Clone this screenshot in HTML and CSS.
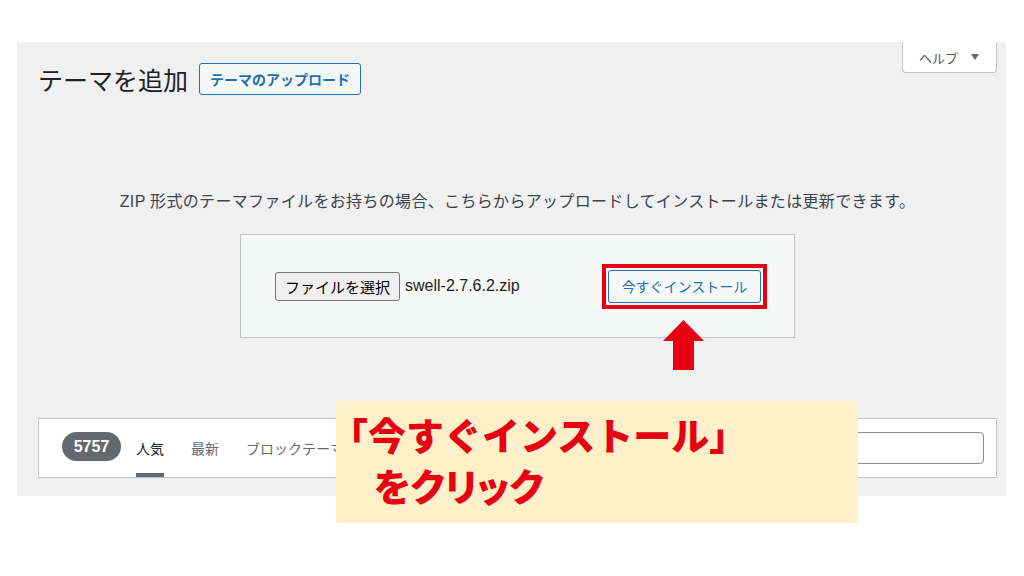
FILE: index.html
```html
<!DOCTYPE html>
<html lang="ja">
<head>
  <meta charset="UTF-8" />
  <meta name="viewport" content="width=device-width, initial-scale=1.0"/>
  <title>テーマを追加</title>
  <link rel="stylesheet" href="styles.css">
</head>
<body>
  <div class="wrap">
    <div class="top-row">
      <div class="heading">
        <h1>テーマを追加</h1>
        <button class="upload-toggle">テーマのアップロード</button>
      </div>
      <button class="help-tab">ヘルプ<span class="caret"></span></button>
    </div>

    <p class="upload-note">ZIP 形式のテーマファイルをお持ちの場合、こちらからアップロードしてインストールまたは更新できます。</p>

    <form class="upload-box" onsubmit="return false">
      <label class="file-pick">
        <span class="file-btn">ファイルを選択</span>
        <span class="file-name">swell-2.7.6.2.zip</span>
      </label>
      <div class="mark">
        <button class="install">今すぐインストール</button>
        <svg class="arrow" width="41" height="50" viewBox="0 0 41 50" aria-hidden="true">
          <polygon points="20.5,0 41,21 31,21 31,50 10,50 10,21 0,21" fill="#e60012"/>
        </svg>
      </div>
    </form>

    <div class="filter-bar">
      <span class="count">5757</span>
      <ul class="tabs">
        <li class="current">人気</li>
        <li>最新</li>
        <li>ブロックテーマ</li>
      </ul>
      <input class="search" type="search" aria-label="テーマを検索">
    </div>
  </div>

  <div class="callout">
    <span class="line-1">「今すぐインストール」</span>
    <span class="line-2">をクリック</span>
  </div>
</body>
</html>
```

FILE: styles.css
```css
body {
  margin: 0;
  background: #fff;
  font-family: "Liberation Sans", "Noto Sans CJK JP", sans-serif;
  color: #3c434a;
  position: relative;
  height: 576px;
  overflow: hidden;
}
.wrap {
  margin: 42px 18px 0 17px;
  height: 454px;
  box-sizing: border-box;
  background: #f0f0f1;
  padding: 0 9px 0 21px;
}
.top-row {
  display: flex;
  justify-content: space-between;
  align-items: flex-start;
}
.heading {
  display: flex;
  align-items: center;
  gap: 11px;
  margin-top: 21px;
  height: 32px;
}
h1 {
  margin: 0;
  font-family: "Noto Sans CJK JP", sans-serif;
  font-size: 25px;
  font-weight: 400;
  line-height: 32px;
  color: #1d2327;
}
.upload-toggle {
  height: 32px;
  padding: 0 10px;
  border: 1px solid #2271b1;
  border-radius: 3px;
  background: #f6f7f7;
  color: #2271b1;
  font: 700 14px/30px "Noto Sans CJK JP", sans-serif;
}
.help-tab {
  display: flex;
  align-items: center;
  height: 31px;
  padding: 0 17px 0 16px;
  border: 1px solid #c3c4c7;
  border-top: none;
  border-radius: 0 0 4px 4px;
  background: #fff;
  color: #50575e;
  font: 13px/1 "Noto Sans CJK JP", sans-serif;
}
.caret {
  margin-left: 13px;
  border-left: 4px solid transparent;
  border-right: 4px solid transparent;
  border-top: 6px solid #646970;
}
.upload-note {
  margin: 95px 0 0;
  font-size: 16px;
  line-height: 24px;
  letter-spacing: 0.33px;
  text-align: center;
}
.upload-box {
  margin: 20px 0 0 202px;
  width: 555px;
  height: 104px;
  box-sizing: border-box;
  border: 1px solid #c3c4c7;
  background: #f6f7f7;
  display: flex;
  align-items: center;
  padding: 0 27px 0 34px;
}
.file-pick {
  display: flex;
  align-items: center;
  gap: 5px;
}
.file-btn {
  height: 29px;
  box-sizing: border-box;
  padding: 0 9px;
  border: 1px solid #767676;
  border-radius: 3px;
  background: #efefef;
  color: #000;
  font: 15px/27px "Noto Sans CJK JP", sans-serif;
}
.file-name {
  font-size: 16px;
  color: #1d2327;
}
.mark {
  position: relative;
  margin-left: auto;
  border: 4px solid #e60012;
  padding: 2px;
}
.install {
  display: block;
  height: 33px;
  width: 153px;
  border: 1px solid #2271b1;
  border-radius: 3px;
  background: #f6f7f7;
  color: #2271b1;
  font: 14px/31px "Noto Sans CJK JP", sans-serif;
  padding: 0;
}
.arrow {
  position: absolute;
  left: 57px;
  top: calc(100% + 15px);
}
.filter-bar {
  margin-top: 80px;
  height: 60px;
  box-sizing: border-box;
  border: 1px solid #c3c4c7;
  background: #fff;
  display: flex;
  align-items: stretch;
  padding: 0 12px 0 23px;
}
.count {
  align-self: center;
  margin: 0 15px 3px 0;
  width: 59px;
  height: 29px;
  border-radius: 15px;
  background: #646970;
  color: #fff;
  font-weight: 700;
  font-size: 16px;
  line-height: 29px;
  text-align: center;
}
.tabs {
  list-style: none;
  margin: 0;
  padding: 0;
  display: flex;
  gap: 27px;
}
.tabs li {
  display: flex;
  align-items: center;
  padding-top: 4px;
  border-bottom: 4px solid transparent;
  font: 14px/1 "Noto Sans CJK JP", sans-serif;
  color: #646970;
}
.tabs li.current {
  color: #1d2327;
  border-bottom-color: #646970;
}
.search {
  margin-left: auto;
  align-self: center;
  width: 230px;
  height: 32px;
  box-sizing: border-box;
  border: 1px solid #8c8f94;
  border-radius: 4px;
  background: #fff;
}
.callout {
  position: absolute;
  left: 336px;
  top: 401px;
  width: 522px;
  height: 122px;
  box-sizing: border-box;
  padding-top: 7px;
  background: #fff0c9;
  color: #e60012;
  font: 900 38px/51px "Noto Sans CJK JP", sans-serif;
  white-space: nowrap;
}
.line-1,
.line-2 {
  display: block;
}
.line-1 {
  margin-left: -6px;
}
.line-2 {
  padding-left: 38px;
  font-feature-settings: "palt";
}
```
